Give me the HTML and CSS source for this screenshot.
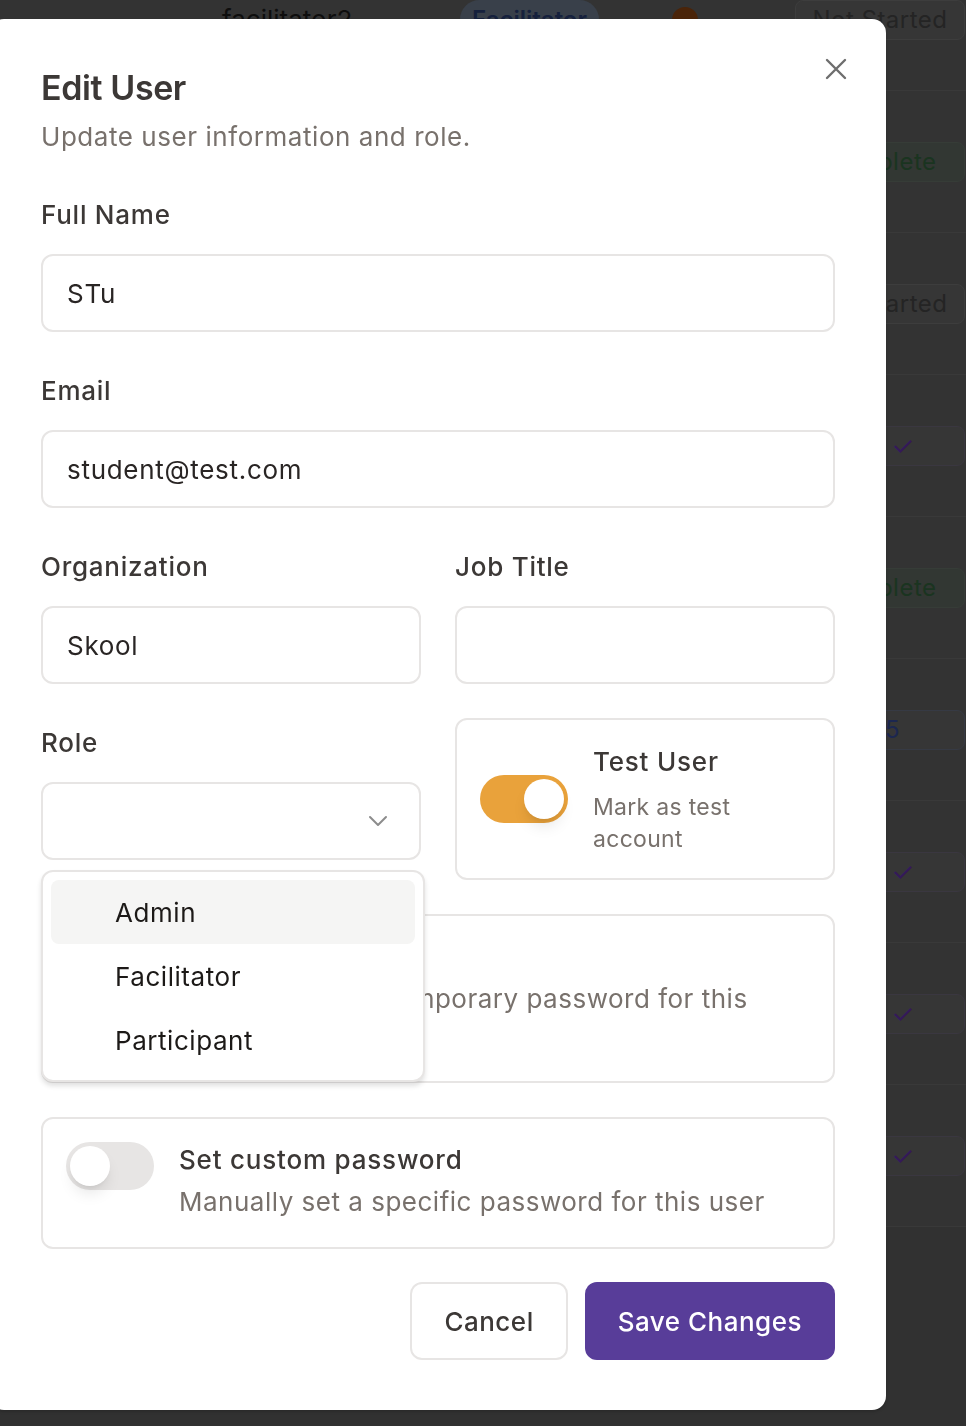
FILE: index.html
```html
<!DOCTYPE html>
<html lang="en">
<head>
<meta charset="utf-8">
<title>Edit User</title>
<link rel="stylesheet" href="styles.css">
</head>
<body>
<div class="table">
  <div class="trow">
    <div class="cell name">facilitator2</div>
    <div class="cell rolec"><span class="role-pill">Facilitator</span></div>
    <div class="cell dotc"><span class="dot"></span></div>
    <div class="cell status"><span class="pill">Not Started</span></div>
  </div>
  <div class="trow"><div class="cell status"><span class="pill green">Complete</span></div></div>
  <div class="trow"><div class="cell status"><span class="pill">Not Started</span></div></div>
  <div class="trow"><div class="cell status"><span class="pill purple check">✓</span></div></div>
  <div class="trow"><div class="cell status"><span class="pill green">Complete</span></div></div>
  <div class="trow"><div class="cell status"><span class="pill blue">1/5</span></div></div>
  <div class="trow"><div class="cell status"><span class="pill purple check">✓</span></div></div>
  <div class="trow"><div class="cell status"><span class="pill purple check">✓</span></div></div>
  <div class="trow"><div class="cell status"><span class="pill purple check">✓</span></div></div>
</div>

<div class="modal">
  <button class="close" aria-label="Close">
    <svg width="24" height="24" viewBox="0 0 24 24" fill="none" stroke="#6e6e6e" stroke-width="2.4" stroke-linecap="round"><path d="M3 3 L21 21 M21 3 L3 21"/></svg>
  </button>
  <h2 class="title">Edit User</h2>
  <p class="subtitle">Update user information and role.</p>

  <div class="form">
    <div class="field">
      <label class="label">Full Name</label>
      <div class="input">STu</div>
    </div>
    <div class="field">
      <label class="label">Email</label>
      <div class="input">student@test.com</div>
    </div>
    <div class="grid2">
      <div class="field">
        <label class="label">Organization</label>
        <div class="input">Skool</div>
      </div>
      <div class="field">
        <label class="label">Job Title</label>
        <div class="input"></div>
      </div>
    </div>
    <div class="grid2 top">
      <div class="field role">
        <label class="label">Role</label>
        <div class="input select">
          <span></span>
          <svg width="20" height="12" viewBox="0 0 20 12" fill="none" stroke="#8c8c8c" stroke-width="2" stroke-linecap="round" stroke-linejoin="round"><path d="M2 2 L10 10 L18 2"/></svg>
        </div>
        <div class="menu">
          <div class="option active">Admin</div>
          <div class="option">Facilitator</div>
          <div class="option">Participant</div>
        </div>
      </div>
      <div class="card center">
        <span class="toggle on"><span class="knob"></span></span>
        <div class="card-text">
          <div class="card-title">Test User</div>
          <div class="card-desc small">Mark as test account</div>
        </div>
      </div>
    </div>
    <div class="card temp">
      <span class="toggle"><span class="knob"></span></span>
      <div class="card-text">
        <div class="card-title">Reset password</div>
        <div class="card-desc wrap">Generate a new temporary password for this user</div>
      </div>
    </div>
    <div class="card custom">
      <span class="toggle"><span class="knob"></span></span>
      <div class="card-text">
        <div class="card-title">Set custom password</div>
        <div class="card-desc">Manually set a specific password for this user</div>
      </div>
    </div>
    <div class="actions">
      <button class="btn cancel">Cancel</button>
      <button class="btn save">Save Changes</button>
    </div>
  </div>
</div>
</body>
</html>
```

FILE: styles.css
```css
* { box-sizing: border-box; }

html, body {
  margin: 0;
  padding: 0;
  height: 100%;
}

body {
  background: #313131;
  font-family: "Inter", "Noto Sans", sans-serif;
  overflow: hidden;
}

/* background table (dimmed behind the modal) */
.table {
  position: relative;
  top: -51px;
}

.trow {
  height: 142px;
  display: grid;
  grid-template-columns: 222px 238px 212px 123px 190px;
  align-items: center;
  border-bottom: 1px solid #393939;
  background: #333333;
}

.name {
  grid-column: 2;
  font-size: 26px;
  color: #0e0e0e;
}

.rolec { grid-column: 3; }
.dotc { grid-column: 4; }
.status { grid-column: 5; }

.role-pill {
  display: inline-block;
  padding: 5px 12px;
  border-radius: 20px;
  background: #39404a;
  color: #16213d;
  font-size: 24px;
  font-weight: 600;
}

.dot {
  display: block;
  width: 26px;
  height: 26px;
  border-radius: 50%;
  background: #4a2409;
}

.pill {
  display: flex;
  align-items: center;
  justify-content: center;
  width: 170px;
  height: 40px;
  border-radius: 8px;
  border: 1px solid #3d3d3d;
  background: #363636;
  color: #242424;
  font-size: 24px;
  letter-spacing: 0.5px;
}

.pill.green { color: #1a3420; background: #323733; border-color: #363c37; }
.pill.purple { color: #34195a; border-color: #3a3740; }
.pill.blue { color: #1c2750; border-color: #363a44; justify-content: flex-end; padding-right: 64px; }
.pill.check { padding-left: 46px; font-size: 26px; }

/* modal */
.modal {
  position: fixed;
  top: 19px;
  left: -10px;
  width: 896px;
  background: #ffffff;
  border-radius: 14px;
  padding: 49px 51px 50px 51px;
  box-shadow: 0 2px 3px rgba(0,0,0,0.15);
}

.close {
  position: absolute;
  top: 38px;
  right: 38px;
  width: 24px;
  height: 24px;
  padding: 0;
  border: 0;
  background: none;
  display: flex;
}

.title {
  margin: 0;
  font-size: 34px;
  line-height: 40px;
  font-weight: 600;
  letter-spacing: -0.4px;
  color: #3c3836;
}

.subtitle {
  margin: 11px 0 0 0;
  font-size: 26px;
  line-height: 36px;
  letter-spacing: 0.55px;
  color: #78716c;
}

.form {
  margin-top: 35px;
  display: flex;
  flex-direction: column;
  gap: 34px;
}

.field {
  padding-top: 7px;
  display: flex;
  flex-direction: column;
}

.label {
  font-size: 26px;
  line-height: 36px;
  font-weight: 500;
  letter-spacing: 0.75px;
  color: #3c3836;
  margin-bottom: 21px;
}

.input {
  height: 78px;
  border: 2px solid #e7e5e4;
  border-radius: 12px;
  padding: 0 24px;
  display: flex;
  align-items: center;
  font-size: 26px;
  letter-spacing: 0.7px;
  color: #292524;
}

.select {
  justify-content: space-between;
  padding-right: 31px;
}

.grid2 {
  display: grid;
  grid-template-columns: 1fr 1fr;
  column-gap: 34px;
}

.grid2.top { align-items: start; }

.role { position: relative; }

.menu {
  position: absolute;
  top: calc(100% + 10px);
  left: 0;
  width: 384px;
  background: #ffffff;
  border: 2px solid #e7e5e4;
  border-radius: 12px;
  padding: 8px;
  box-shadow: 0 4px 5px rgba(0,0,0,0.12);
  z-index: 5;
}

.option {
  height: 64px;
  padding-left: 64px;
  display: flex;
  align-items: center;
  font-size: 26px;
  letter-spacing: 0.55px;
  color: #1c1917;
  border-radius: 8px;
}

.option.active { background: #f5f5f4; }

.card {
  border: 2px solid #e7e5e4;
  border-radius: 12px;
  padding: 23px;
  display: flex;
  align-items: flex-start;
  gap: 25px;
}

.card.center {
  align-items: center;
  height: 162px;
}

.card.temp { padding-bottom: 28px; }
.card.custom { padding-bottom: 27px; }

.toggle {
  flex: none;
  width: 88px;
  height: 48px;
  border-radius: 24px;
  background: #e7e5e4;
  padding: 4px;
  display: flex;
}

.toggle.on {
  background: #e9a23b;
  justify-content: flex-end;
}

.knob {
  width: 40px;
  height: 40px;
  border-radius: 50%;
  background: #ffffff;
  box-shadow: 0 10px 15px -3px rgba(0,0,0,0.1), 0 4px 6px -4px rgba(0,0,0,0.1);
}

.card-title {
  font-size: 26px;
  line-height: 36px;
  font-weight: 500;
  letter-spacing: 0.8px;
  color: #3c3836;
}

.card-desc {
  margin-top: 6px;
  font-size: 26px;
  line-height: 36px;
  letter-spacing: 0.5px;
  color: #78716c;
}

.card-desc.small {
  margin-top: 11px;
  font-size: 23px;
  line-height: 32px;
  letter-spacing: 0.3px;
}

.card-desc.wrap { max-width: 600px; }

.actions {
  display: flex;
  justify-content: flex-end;
  gap: 17px;
  margin-top: -1px;
}

.btn {
  height: 78px;
  border-radius: 12px;
  font-family: inherit;
  font-size: 26px;
  font-weight: 500;
  letter-spacing: 0.5px;
  padding: 0 32px;
}

.cancel {
  background: #ffffff;
  border: 2px solid #e7e5e4;
  color: #3c3836;
}

.save {
  padding: 0 31px;
  background: #583d99;
  border: 2px solid #583d99;
  color: #ffffff;
}
```
